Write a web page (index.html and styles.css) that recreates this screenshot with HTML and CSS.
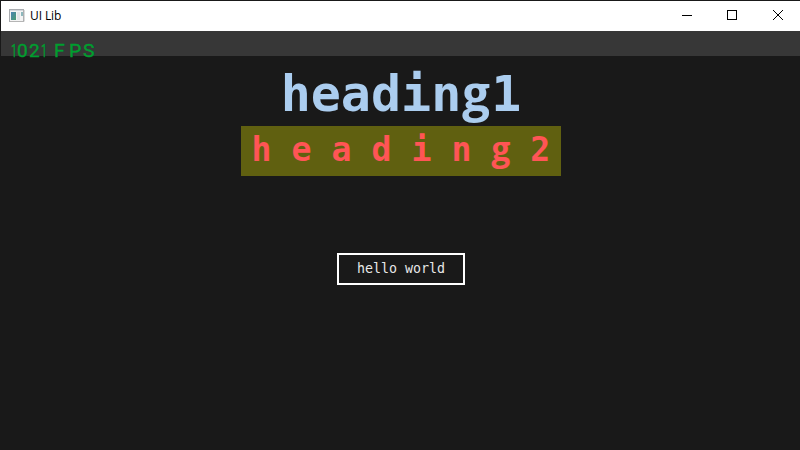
FILE: index.html
```html
<!DOCTYPE html>
<html lang="en">
<head>
<meta charset="utf-8">
<title>UI Lib</title>
<link rel="stylesheet" href="styles.css">
</head>
<body>
<div class="window">
  <header class="titlebar">
    <svg class="app-icon" width="16" height="14" viewBox="0 0 16 14">
      <defs><linearGradient id="pane" x2="1" y2="1"><stop offset="0" stop-color="#4b83b3"/><stop offset="1" stop-color="#4b9c70"/></linearGradient></defs>
      <rect x=".5" y=".5" width="14" height="12" fill="#f4f4f4" stroke="#a9acb0"/>
      <path d="M1 1.5h13" stroke="#d4d7dc"/>
      <rect x="2" y="3" width="5" height="8" fill="url(#pane)"/>
      <path d="M8 3h3v8H8z" fill="#e3e5e7"/>
      <path d="M12 3h2v4h-2z" fill="#8eb8bd"/>
      <path d="M1 12.5h14V1" fill="none" stroke="#b5b5b5"/>
    </svg>
    <span class="title">UI Lib</span>
    <svg class="controls" width="104" height="12" viewBox="0 0 104 12" fill="none" stroke="#000" shape-rendering="crispEdges">
      <path d="M0 5.5h10M45.500 .5h9v9h-9z"/>
      <path d="M91 0l10 10M101 0L91 10" shape-rendering="auto"/>
    </svg>
  </header>
  <div class="strip"><span class="fps"><span class="one">1</span><span class="digit">0</span><span class="digit">2</span><span class="one">1</span> <span class="cap first">F</span><span class="cap">P</span><span class="cap">S</span></span></div>
  <main class="content">
    <h1 class="heading1">headin<span class="g">g</span>1</h1>
    <h2 class="heading2">headin<span class="g">g</span>2</h2>
    <button class="hello">hello world</button>
  </main>
</div>
</body>
</html>
```
FILE: styles.css
```css
* { box-sizing: border-box; }
body { margin: 0; background: #191919; overflow: hidden; }
.window { height: 450px; border: solid #191919; border-width: 1px 0 0 1px; }
.titlebar { display: flex; align-items: center; height: 30px; padding: 0 14px 0 8px; background: #fff; }
.title { margin-left: 5px; font: 12px/16px "Open Sans", sans-serif; letter-spacing: -.1px; color: #000; }
.controls { margin-left: auto; }
.strip { height: 25px; padding: 10px 0 0 10px; background: #373737; }
.fps { display: flex; font: 19px/20px Roboto, sans-serif; color: #009e2f; -webkit-text-stroke: .4px #009e2f; }
.fps span { display: block; transform-origin: 0 50%; }
.fps .one { width: 6px; transform: scaleX(.56); }
.digit { width: 12px; }
.cap { width: 14.5px; }
.fps .cap { transform: scaleX(1.02); }
.first { margin-left: 7px; }
.content { display: flex; flex-direction: column; align-items: center; }
.heading1, .heading2 { display: flex; margin: 0; font-family: "DejaVu Sans Mono", monospace; font-weight: bold; }
.g { display: inline-block; font-family: "Open Sans", sans-serif; }
.heading1 { height: 70px; padding: 8px 0 0 1px; font-size: 50px; line-height: 60px; color: #abcdef; }
.heading1 .g { width: 30px; font-size: 49px; line-height: 57px; padding-left: 1px; }
.heading2 { width: 320px; height: 50px; padding-left: 11px; background: #606010; font-size: 33.2px; line-height: 48px; letter-spacing: 20px; color: #ff5555; }
.heading2 .g { width: 40px; line-height: 46px; }
.hello { width: 128px; height: 32px; margin-top: 77px; padding: 0 0 0 1px; border: 2px solid #fff; background: #191919; color: #e8e8e8; font: 13.3px/20px "DejaVu Sans Mono", monospace; }
```
